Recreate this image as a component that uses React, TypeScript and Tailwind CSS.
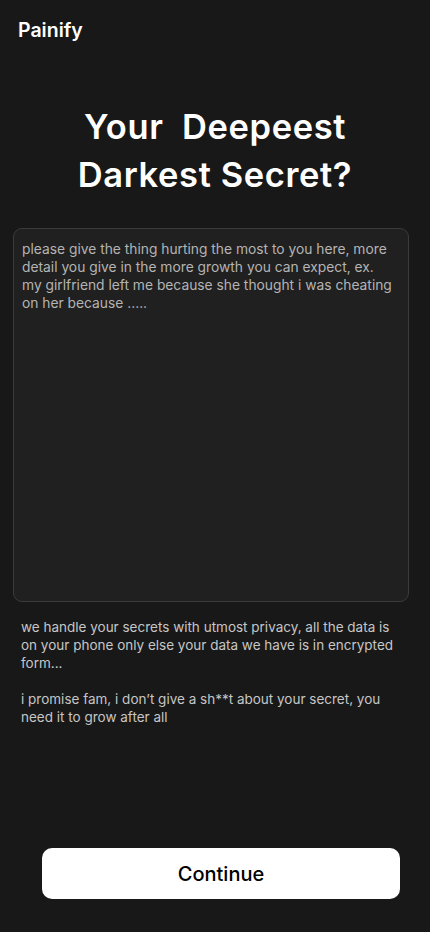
import { useState } from "react";

const hint =
  "please give the thing hurting the most to you here, more detail you give in the more growth you can expect, ex.\nmy girlfriend left me because she thought i was cheating\non her because .....";

export default function App() {
  const [secret, setSecret] = useState("");

  return (
    <div
      className="h-[932px] w-full bg-[#181818] text-white flex flex-col"
      style={{ fontFamily: "Inter, 'Open Sans', sans-serif" }}
    >
      <header className="pt-[17px] pl-[18px]">
        <h1 className="text-[19.5px] font-semibold tracking-[0px] leading-[26px]">Painify</h1>
      </header>

      <h2 className="mt-[60px] text-center text-[34.5px] font-semibold leading-[48px] tracking-[0.6px]">
        Your&nbsp; Deepeest
        <br />
        Darkest Secret?
      </h2>

      {/* textarea */}
      <div className="mt-[29px] mx-[13px] mr-[21px]">
        <textarea
          value={secret}
          onChange={(e) => setSecret(e.target.value)}
          placeholder={hint}
          className="block w-full h-[374px] resize-none rounded-[9px] border border-[#3b3b3b] bg-[#202020] pl-[8px] pr-[6px] pt-[11px] text-[13.8px] leading-[18px] text-[#bdbdbd] placeholder:text-[#b4b4b4] outline-none"
        />
      </div>

      <div className="mt-[16px] px-[21px] pr-[24px] text-[13.5px] leading-[18px] text-[#c6c6c6] flex flex-col gap-[18px]">
        <p>
          we handle your secrets with utmost privacy, all the data is on your phone only else your data we have is in encrypted form...
        </p>
        <p>i promise fam, i don’t give a sh**t about your secret, you need it to grow after all</p>
      </div>

      <div className="mt-auto mb-[33px] px-[42px] pr-[30px]">
        <button className="w-full h-[51px] rounded-[10px] bg-white text-black text-[20px] font-medium">
          Continue
        </button>
      </div>
    </div>
  );
}
